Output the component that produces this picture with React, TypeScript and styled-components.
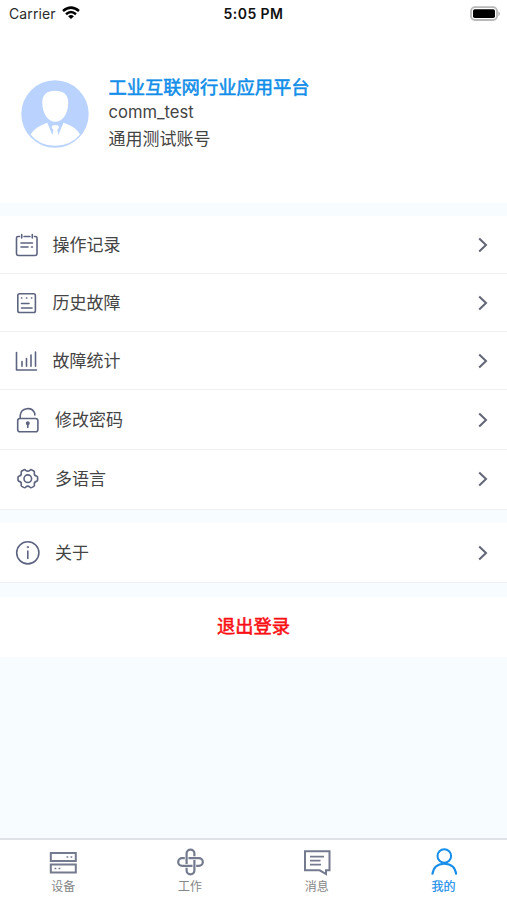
import React from 'react';
import styled, { createGlobalStyle } from 'styled-components';

const GlobalStyle = createGlobalStyle`
  * { box-sizing: border-box; }
  body {
    margin: 0;
    background: #f7fbff;
    font-family: Inter, "Noto Sans CJK SC", sans-serif;
    color: #444;
  }
`;

const Screen = styled.div`
  display: flex;
  flex-direction: column;
  width: 507px;
  height: 900px;
  overflow: hidden;
  background: #f7fcff;
`;

const StatusBar = styled.header`
  display: grid;
  grid-template-columns: 1fr auto 1fr;
  align-items: center;
  height: 28px;
  padding: 0 6px 0 9px;
  background: #fff;
  color: #111;
  font-size: 14px;
  line-height: 28px;
`;

const Carrier = styled.div`
  display: flex;
  align-items: center;
  gap: 6px;
  letter-spacing: 0.12px;
  color: #2a2a2a;
  svg { margin-top: -3px; }
`;

const Clock = styled.div`
  margin-right: 3px;
  font-weight: 600;
  font-size: 14px;
  letter-spacing: 0.45px;
`;

const Battery = styled.div`
  display: flex;
  justify-content: flex-end;
`;

const Profile = styled.section`
  display: flex;
  height: 175px;
  padding: 46px 21px 0;
  gap: 19.5px;
  background: #fff;
`;

const Avatar = styled.svg`
  width: 68px;
  height: 68px;
  margin-top: 6px;
`;

const ProfileText = styled.div`
  display: flex;
  flex-direction: column;
  font-size: 17px;
  line-height: 28px;
`;

const PlatformName = styled.div`
  color: #108ee9;
  font-size: 18.3px;
  font-weight: 400;
  line-height: 26px;
  -webkit-text-stroke: 0.55px currentColor;
`;

const Account = styled.div`
  height: 25px;
  line-height: 25px;
  font-size: 16.6px;
`;

const List = styled.section`
  margin-top: 13px;
  background: #fff;
`;

const Row = styled.div<{ $height: number; $indent?: boolean; $shift?: number }>`
  display: flex;
  align-items: center;
  height: ${(p) => p.$height}px;
  padding: ${(p) => p.$shift ?? 0}px 18px 0 ${(p) => (p.$indent ? 14 : 13)}px;
  border-bottom: 1px solid #f0f0f3;
`;

const RowIcon = styled.svg`
  width: 28px;
  height: 28px;
  fill: none;
  stroke: #5d6480;
  stroke-width: 1.6;
  stroke-linecap: round;
  stroke-linejoin: round;
`;

const RowLabel = styled.span<{ $indent?: boolean }>`
  flex: 1;
  margin-left: ${(p) => (p.$indent ? 13 : 11.5)}px;
  font-size: 17px;
  line-height: 24px;
`;

const Chevron = styled.svg`
  width: 12px;
  height: 18px;
  fill: none;
  stroke: #626675;
  stroke-width: 2;
`;

const Logout = styled.button`
  height: 60px;
  margin-top: 14px;
  padding: 0 0 2px;
  border: 0;
  background: #fff;
  color: #fa0f14;
  font: 400 18.25px/58px Inter, "Noto Sans CJK SC", sans-serif;
  -webkit-text-stroke: 0.55px currentColor;
`;

const TabBar = styled.nav`
  display: grid;
  grid-template-columns: repeat(4, 1fr);
  height: 62px;
  margin-top: auto;
  border-top: 2px solid #dfe2e7;
  background: #fff;
`;

const Tab = styled.div<{ $active?: boolean }>`
  display: flex;
  flex-direction: column;
  align-items: center;
  padding: 7px 0 0;
  color: ${(p) => (p.$active ? '#168eea' : '#858585')};
  font-size: 12px;
  -webkit-text-stroke: ${(p) => (p.$active ? '0.2px currentColor' : '0')};
  line-height: 20px;
`;

const TabIcon = styled.svg<{ $active?: boolean }>`
  width: 30px;
  height: 30px;
  fill: none;
  stroke: ${(p) => (p.$active ? '#168eea' : '#747b8e')};
  stroke-width: 2;
`;

const icons: Record<string, React.ReactNode> = {
  records: (
    <>
      <path d="M6.5 5.5H5Q3.5 5.5 3.5 7V22.5Q3.5 24.5 5.5 24.5H22Q24 24.5 24 22.5V7Q24 5.5 22.5 5.5H21.5M11 5.5H17M8.7 3.5V7M19.3 3.5V7" />
      <path d="M8 12H19.5M8 16H15M18.5 16H19.5" />
    </>
  ),
  history: (
    <>
      <rect x="4.8" y="4.7" width="17.6" height="18.8" rx="1.8" />
      <path d="M8.5 9H8.8M13.5 9H13.8M18.5 9H18.8M8.5 14.5H16M8.5 19H19" />
    </>
  ),
  stats: <path d="M3.5 5.5V23H23.5M9 14.5V19.2M13.5 11.5V19.2M18 8V19.2M22.5 5V19.2" />,
  lock: (
    <>
      <rect x="3.7" y="12.5" width="20.2" height="13.3" rx="2.3" />
      <path d="M6.2 12V9.4A7.6 7.6 0 0 1 20.8 7.4V9" />
      <path d="M13.8 18.5V21.5" />
      <circle cx="13.8" cy="17.3" r="1.2" fill="#5d6480" />
    </>
  ),
  gear: (
    <>
      <path d="M9.6 5Q10.9 4.2 11.7 5.3Q13.8 7.1 15.9 5.3Q16.7 4.2 18 5L19.8 6Q20.9 6.8 20.3 8.2Q20.1 10.5 22.4 11Q23.9 11.3 23.6 13.7Q23.9 16.1 22.4 16.4Q20.1 16.9 20.3 19.2Q20.9 20.6 19.8 21.4L18 22.4Q16.7 23.2 15.9 22.1Q13.8 20.3 11.7 22.1Q10.9 23.2 9.6 22.4L7.8 21.4Q6.7 20.6 7.3 19.2Q7.5 16.9 5.2 16.4Q3.7 16.1 4 13.7Q3.7 11.3 5.2 11Q7.5 10.5 7.3 8.2Q6.7 6.8 7.8 6Z" />
      <circle cx="13.8" cy="13.7" r="3.8" />
    </>
  ),
  info: (
    <>
      <circle cx="13.8" cy="13.8" r="11.1" />
      <path d="M13.8 12V19.5" />
      <circle cx="13.8" cy="8.1" r=".7" fill="#5d6480" stroke="#5d6480" strokeWidth=".8" />
    </>
  ),
};

type RowData = { icon: string; label: string; height: number; indent?: boolean; shift?: number };

const rows: RowData[] = [
  { icon: 'records', label: '操作记录', height: 57.5, shift: 1.5 },
  { icon: 'history', label: '历史故障', height: 58, shift: 1 },
  { icon: 'stats', label: '故障统计', height: 58, shift: 1 },
  { icon: 'lock', label: '修改密码', height: 60, indent: true, shift: 1 },
  { icon: 'gear', label: '多语言', height: 60.5, indent: true },
];

const MenuRow = ({ icon, label, height, indent, shift }: RowData) => (
  <Row $height={height} $indent={indent} $shift={shift}>
    <RowIcon viewBox="0 0 28 28">{icons[icon]}</RowIcon>
    <RowLabel $indent={indent}>{label}</RowLabel>
    <Chevron viewBox="0 0 12 18">
      <path d="M2.2 2.5L9 9L2.2 15.5" />
    </Chevron>
  </Row>
);

const knotArm = 'M11.6 17V6.6A3.9 3.9 0 0 1 19.4 6.6V9.3';

export default function App() {
  return (
    <>
      <GlobalStyle />
      <Screen>
        <StatusBar>
          <Carrier>
            Carrier
            <svg width="18" height="14" viewBox="0 0 18 14" fill="none" stroke="#000" strokeWidth="2.5">
              <path d="M1 5Q9-1.8 17 5M4 8.2Q9 3.8 14 8.2" />
              <path d="M9 13L6.1 10.3Q9 7.8 11.9 10.3Z" fill="#000" stroke="none" />
            </svg>
          </Carrier>
          <Clock>5:05 PM</Clock>
          <Battery>
            <svg width="32" height="16" viewBox="0 0 32 16">
              <rect x="2" y="1.2" width="26" height="12.8" rx="4" fill="#fff" stroke="#b8b8b8" strokeWidth="1.8" />
              <rect x="4" y="3.2" width="22" height="8.8" rx="1.8" fill="#000" />
              <path d="M29.3 5.3Q31 6.2 31 7.8T29.3 10.3Z" fill="#b8b8b8" />
            </svg>
          </Battery>
        </StatusBar>

        <Profile>
          <Avatar viewBox="0 0 68 68">
            <circle cx="34" cy="34" r="33.7" fill="#b9d3fe" />
            <path
              d="M34 10.8C42 10.8 47.3 14 47.2 23C47.2 33 42 41.8 34.3 41.8C26.8 41.8 21.3 33 21.3 23C21.2 14 26.5 10.8 34 10.8Z"
              fill="#fff"
            />
            <path d="M26.3 42.8L33 59L34.3 63L35.6 59L42.5 42.8Q55 46.8 59 54.5Q49.8 65.8 34 65.8Q18.5 65.8 9.5 54.5Q14 47 26.3 42.8Z" fill="#fff" />
            <path d="M31.6 45.3H37L38 47.5L36.3 50L37.8 57L34.3 64L30.8 57L32.5 50L30.6 47.5Z" fill="#fff" />
          </Avatar>
          <ProfileText>
            <PlatformName>工业互联网行业应用平台</PlatformName>
            <Account>comm_test</Account>
            <div>通用测试账号</div>
          </ProfileText>
        </Profile>

        <List>
          {rows.map((row) => (
            <MenuRow key={row.icon} {...row} />
          ))}
        </List>
        <List>
          <MenuRow icon="info" label="关于" height={60} indent shift={1} />
        </List>
        <Logout>退出登录</Logout>

        <TabBar>
          <Tab>
            <TabIcon viewBox="0 0 30 30">
              <path d="M2.8 6H27.8V14H2.8ZM2.8 17.5H27.8V25.5H2.8Z" />
              <path d="M18.5 10H20.3M22.5 10H24.3M6.5 21.5H8.3M10.5 21.5H12.3" strokeWidth="1.6" />
            </TabIcon>
            设备
          </Tab>
          <Tab>
            <TabIcon viewBox="0 0 30 30">
              {[0, 90, 180, 270].map((angle) => (
                <path key={angle} d={knotArm} transform={`rotate(${angle} 15.5 15)`} strokeWidth="2.2" />
              ))}
            </TabIcon>
            工作
          </Tab>
          <Tab>
            <TabIcon viewBox="0 0 30 30">
              <path d="M3 4.2H27.5V23.3H24V27L17.7 23.3H3Z" />
              <path d="M8 9.7H22M8 13.7H18.5M8 17.7H19" strokeWidth="1.8" />
            </TabIcon>
            消息
          </Tab>
          <Tab $active>
            <TabIcon viewBox="0 0 30 30" $active>
              <circle cx="15.3" cy="9" r="6.8" />
              <path d="M3.3 27.7C4.2 20.4 8.8 16.8 15.3 16.8S26.4 20.4 27.3 27.7" />
            </TabIcon>
            我的
          </Tab>
        </TabBar>
      </Screen>
    </>
  );
}
